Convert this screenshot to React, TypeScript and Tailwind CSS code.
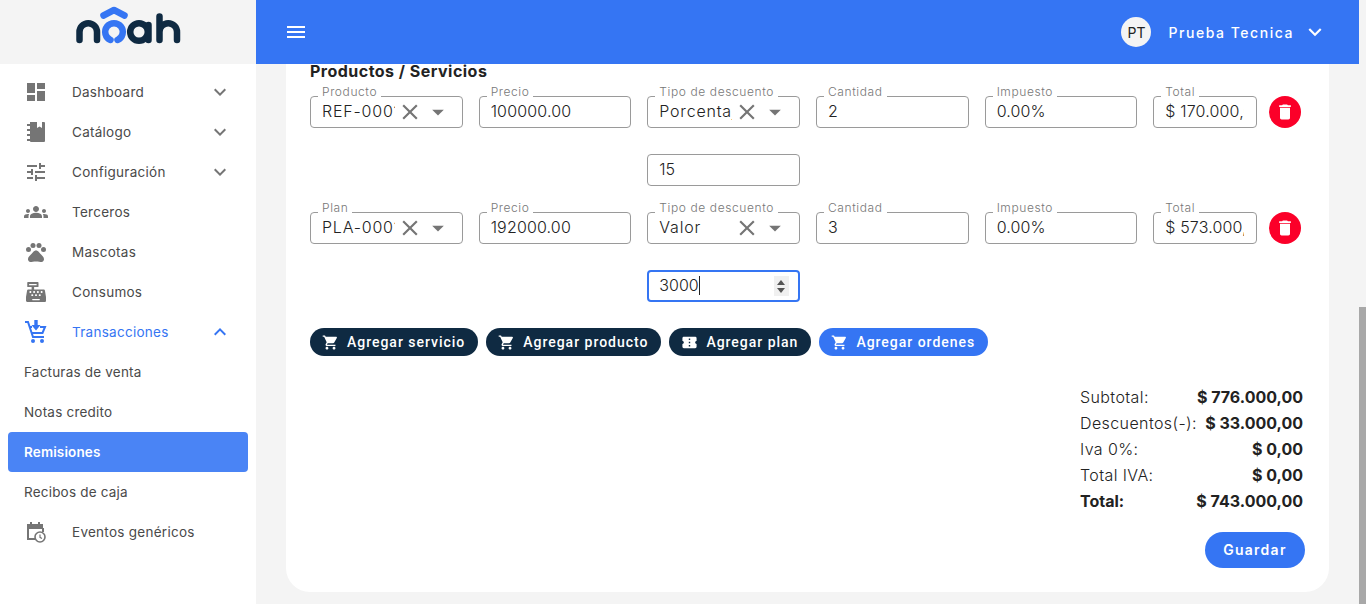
import type { ReactNode } from "react";
import {
  MdArrowDropDown,
  MdClose,
  MdConfirmationNumber,
  MdDashboard,
  MdDelete,
  MdExpandLess,
  MdExpandMore,
  MdGroups,
  MdMenu,
  MdPets,
  MdShoppingCart,
  MdTune,
} from "react-icons/md";
import { FaCashRegister } from "react-icons/fa";

function NoahLogo() {
  return (
    <svg width="108" height="40" viewBox="76 6 108 40" fill="none" strokeWidth="6.5" strokeLinecap="round">
      <path d="M80.5 40V32A8.75 8.75 0 0 1 98 32V40" stroke="#0f2a42" />
      <path d="M111.5 40A8.8 8.8 0 1 1 118.5 40" stroke="#3575f3" />
      <path d="M104.5 15.5L115 10L125.5 15.5" stroke="#3575f3" strokeLinejoin="round" />
      <circle cx="140" cy="32" r="8.8" stroke="#0f2a42" />
      <path d="M149.5 25V40" stroke="#0f2a42" />
      <path d="M160.5 16.5V40M160.5 32A8.75 8.75 0 0 1 178 32V40" stroke="#0f2a42" />
    </svg>
  );
}

function NotebookIcon() {
  return (
    <svg width="20" height="22" viewBox="0 0 20 22" fill="#757575">
      <path d="M4 1h7v6l2.5-1.5L16 7V1h2a1 1 0 0 1 1 1v18a1 1 0 0 1-1 1H5a1 1 0 0 1-1-1z" />
      <path d="M1 3h3v2H1zM1 8h3v2H1zM1 13h3v2H1zM1 18h3v2H1z" />
    </svg>
  );
}

function CartDownIcon() {
  return (
    <svg width="22" height="24" viewBox="0 0 22 24" fill="none" stroke="#3575f3" strokeWidth="2">
      <path d="M0 2h3l5 15h11" />
      <path d="M5 7h2M15 7h5l-2.5 6H7" />
      <path d="M11 0v6" strokeWidth="3.4" />
      <path d="M6.5 5h9L11 10.5z" fill="#3575f3" stroke="none" />
      <circle cx="8" cy="21" r="2" fill="#3575f3" stroke="none" />
      <circle cx="17" cy="21" r="2" fill="#3575f3" stroke="none" />
    </svg>
  );
}

function CalendarClockIcon() {
  return (
    <svg width="22" height="22" viewBox="0 0 22 22" fill="none">
      <path d="M2 3h3V1h2v2h6V1h2v2h3v5H2z" fill="#757575" />
      <path d="M3 7v11h7" stroke="#757575" strokeWidth="2" />
      <path d="M18 7v4" stroke="#757575" strokeWidth="2" />
      <circle cx="15" cy="16" r="5" stroke="#757575" strokeWidth="1.6" fill="#fff" />
      <path d="M15 13.5V16.4L17 17.5" stroke="#757575" strokeWidth="1.2" />
    </svg>
  );
}

const topItems: { label: string; icon: ReactNode; chevron?: boolean }[] = [
  { label: "Dashboard", icon: <MdDashboard size={24} color="#757575" />, chevron: true },
  { label: "Catálogo", icon: <NotebookIcon />, chevron: true },
  { label: "Configuración", icon: <MdTune size={24} color="#757575" />, chevron: true },
  { label: "Terceros", icon: <MdGroups size={24} color="#757575" /> },
  { label: "Mascotas", icon: <MdPets size={24} color="#757575" /> },
  { label: "Consumos", icon: <FaCashRegister size={20} color="#757575" /> },
];

function NavItem({ label, icon, chevron }: { label: string; icon: ReactNode; chevron?: boolean }) {
  return (
    <div className="flex h-10 items-center pr-6 pl-6 text-[13.5px] tracking-[0.02em] text-[#4a4a4a]">
      <span className="flex w-6 justify-center">{icon}</span>
      <span className="ml-6 flex-1">{label}</span>
      {chevron && <MdExpandMore size={24} color="#757575" />}
    </div>
  );
}

function SubItem({ label, active }: { label: string; active?: boolean }) {
  return (
    <div
      className={
        active
          ? "mx-2 flex h-10 items-center rounded bg-[#4a84f5] px-4 text-[13.5px] font-semibold tracking-[0.01em] text-white"
          : "flex h-10 items-center px-6 text-[13.5px] tracking-[0.015em] text-[#4a4a4a]"
      }
    >
      {label}
    </div>
  );
}

function Sidebar() {
  return (
    <aside className="w-64 shrink-0 bg-white">
      <div className="flex h-16 items-start justify-center bg-[#f4f4f4] pt-[6px] pl-[2px]">
        <NoahLogo />
      </div>
      <nav className="pt-2">
        {topItems.map((item) => (
          <NavItem key={item.label} {...item} />
        ))}
        <div className="flex h-10 items-center pr-6 pl-6 text-[13.5px] tracking-[0.02em] text-[#3575f3]">
          <span className="flex w-6 justify-center">
            <CartDownIcon />
          </span>
          <span className="ml-6 flex-1">Transacciones</span>
          <MdExpandLess size={24} color="#3575f3" />
        </div>
        <SubItem label="Facturas de venta" />
        <SubItem label="Notas credito" />
        <SubItem label="Remisiones" active />
        <SubItem label="Recibos de caja" />
        <NavItem label="Eventos genéricos" icon={<CalendarClockIcon />} />
      </nav>
    </aside>
  );
}

function Field({ label, children, focused }: { label?: string; children: ReactNode; focused?: boolean }) {
  return (
    <div
      className={
        focused
          ? "relative flex h-8 items-center rounded border-2 border-[#3575f3] bg-white pr-[9px] pb-[2px] pl-[10px]"
          : "relative flex h-8 items-center rounded border border-[#9a9a9a] bg-white pr-3 pb-[2px] pl-[11px]"
      }
    >
      {label && (
        <span className="absolute -top-[12px] left-[7px] bg-white px-1 text-[12px] leading-[13px] font-light tracking-[0.05em] whitespace-nowrap text-[#777]">
          {label}
        </span>
      )}
      {children}
    </div>
  );
}

function SelectField({ label, value }: { label: string; value: string }) {
  return (
    <Field label={label}>
      <span className="w-[73px] shrink-0 overflow-hidden text-[16px] font-light tracking-[0.05em] whitespace-nowrap text-[#222]">
        {value}
      </span>
      <MdClose size={26} color="#757575" className="mt-[2px] ml-[2px] shrink-0" />
      <MdArrowDropDown size={28} color="#757575" className="mt-[2px] ml-[1px] shrink-0" />
    </Field>
  );
}

function TextField({ label, value }: { label: string; value: string }) {
  return (
    <Field label={label}>
      <span className="overflow-hidden text-[16px] font-light tracking-[0.01em] whitespace-nowrap text-[#222]">
        {value}
      </span>
    </Field>
  );
}

function ProductRow({
  kind,
  code,
  price,
  discountType,
  qty,
  total,
  discount,
}: {
  kind: string;
  code: string;
  price: string;
  discountType: string;
  qty: string;
  total: string;
  discount: ReactNode;
}) {
  return (
    <div className="grid grid-cols-[repeat(5,152.67px)_148px] gap-x-4 gap-y-[26px]">
      <SelectField label={kind} value={code} />
      <TextField label="Precio" value={price} />
      <SelectField label="Tipo de descuento" value={discountType} />
      <TextField label="Cantidad" value={qty} />
      <TextField label="Impuesto" value="0.00%" />
      <div className="flex items-center gap-3">
        <div className="min-w-0 flex-1">
          <TextField label="Total" value={total} />
        </div>
        <button className="flex size-8 shrink-0 items-center justify-center rounded-full bg-[#fb0029]">
          <MdDelete size={20} color="#fff" />
        </button>
      </div>
      <div className="col-start-3">{discount}</div>
    </div>
  );
}

function Spinner() {
  return (
    <span className="mt-[2px] ml-auto flex h-5 w-[15px] flex-col items-center justify-center gap-[3px] bg-[#f0f0f0]">
      <svg width="8" height="5" viewBox="0 0 8 5" fill="#555">
        <path d="M4 0l4 5H0z" />
      </svg>
      <svg width="8" height="5" viewBox="0 0 8 5" fill="#555">
        <path d="M0 0h8L4 5z" />
      </svg>
    </span>
  );
}

function ActionButton({ label, icon, blue }: { label: string; icon: ReactNode; blue?: boolean }) {
  return (
    <button
      className={
        (blue ? "bg-[#3575f3] " : "bg-[#0f2a42] ") +
        "flex h-7 items-center gap-2 rounded-full pr-[13px] pl-[12px] font-['Roboto',sans-serif] text-[14px] font-medium tracking-[0.07em] text-white"
      }
    >
      {icon}
      {label}
    </button>
  );
}

function TotalRow({ label, value, bold }: { label: string; value: string; bold?: boolean }) {
  return (
    <div className="flex h-[26px] items-center justify-between text-[16px] text-[#222]">
      <span className={bold ? "font-bold" : "font-light tracking-[0.025em]"}>{label}</span>
      <span className="font-bold">{value}</span>
    </div>
  );
}

export default function App() {
  return (
    <div className="flex h-screen w-screen overflow-hidden bg-[#f4f4f4] font-['Inter',sans-serif]">
      <Sidebar />
      <div className="flex min-w-0 flex-1 flex-col">
        <header className="flex h-16 shrink-0 items-center bg-[#3575f3] pr-[31px] pl-[28px] text-white">
          <MdMenu size={24} />
          <div className="ml-auto flex size-[30px] items-center justify-center rounded-full bg-[#f4f4f4] text-[14px] text-[#222]">
            PT
          </div>
          <span className="ml-[17px] text-[14px] font-medium tracking-[0.11em]">Prueba Tecnica</span>
          <MdExpandMore size={26} className="ml-2" />
        </header>
        <main className="mx-[30px] mb-3 flex flex-1 flex-col rounded-b-3xl bg-white px-6">
          <h2 className="text-[16px] leading-[14px] font-bold tracking-[0.03em] text-[#222]">Productos / Servicios</h2>
          <div className="mt-[18px] flex flex-col gap-[26px]">
            <ProductRow
              kind="Producto"
              code="REF-0001"
              price="100000.00"
              discountType="Porcentaje"
              qty="2"
              total="$ 170.000,00"
              discount={
                <Field>
                  <span className="text-[16px] font-light text-[#222]">15</span>
                </Field>
              }
            />
            <ProductRow
              kind="Plan"
              code="PLA-0001"
              price="192000.00"
              discountType="Valor"
              qty="3"
              total="$ 573.000,00"
              discount={
                <Field focused>
                  <span className="text-[16px] font-light text-[#222]">3000</span>
                  <span className="h-[19px] w-px bg-[#222]" />
                  <Spinner />
                </Field>
              }
            />
          </div>
          <div className="mt-[26px] flex gap-2">
            <ActionButton label="Agregar servicio" icon={<MdShoppingCart size={17} />} />
            <ActionButton label="Agregar producto" icon={<MdShoppingCart size={17} />} />
            <ActionButton label="Agregar plan" icon={<MdConfirmationNumber size={17} />} />
            <ActionButton label="Agregar ordenes" icon={<MdShoppingCart size={17} />} blue />
          </div>
          <div className="mt-7 mr-[2px] ml-auto w-[223px]">
            <TotalRow label="Subtotal:" value="$ 776.000,00" />
            <TotalRow label="Descuentos(-):" value="$ 33.000,00" />
            <TotalRow label="Iva 0%:" value="$ 0,00" />
            <TotalRow label="Total IVA:" value="$ 0,00" />
            <TotalRow label="Total:" value="$ 743.000,00" bold />
          </div>
          <button className="mt-[18px] h-9 w-[100px] self-end rounded-full bg-[#3575f3] pb-[2px] text-[14px] font-semibold tracking-[0.09em] text-white">
            Guardar
          </button>
        </main>
      </div>
      <div className="flex w-[7px] shrink-0 flex-col justify-end">
        <div className="h-[297px] bg-[#a8a8a8]" />
      </div>
    </div>
  );
}
